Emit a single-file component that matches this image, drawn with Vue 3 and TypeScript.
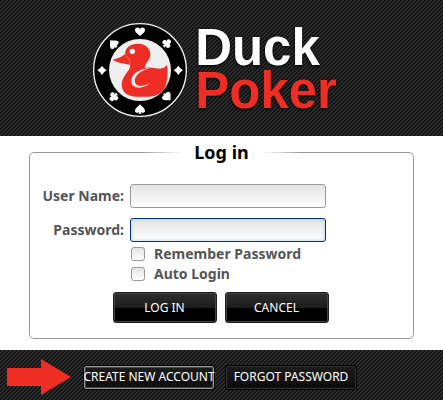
<script setup lang="ts">
import { ref } from 'vue'

const userName = ref('')
const password = ref('')
const remember = ref(false)
const autoLogin = ref(false)

interface Pip { suit: 'heart' | 'club' | 'diamond' | 'spade'; x: number; y: number; turn: number }

const shapes: Record<Pip['suit'], string> = {
  heart: 'M0 13C-5 8-15 3-15-5C-15-14-4-15 0-8C4-15 15-14 15-5C15 3 5 8 0 13Z',
  spade: 'M0-14C4-8 15-2 15 5C15 12 6 13 2 9L5 14H-5L-2 9C-6 13-15 12-15 5C-15-2-4-8 0-14Z',
  diamond: 'M0-14Q5-5 14 0Q5 5 0 14Q-5 5-14 0Q-5-5 0-14Z',
  club: 'M0-14C8-14 9-6 4-3C9-7 15-2 14 4C12 11 5 11 2 6L5 14H-5L-2 6C-5 11-12 11-14 4C-15-2-9-7-4-3C-9-6-8-14 0-14Z',
}

const pips: Pip[] = [
  { suit: 'heart', x: 162, y: 51, turn: 0 },
  { suit: 'club', x: 243, y: 86, turn: 45 },
  { suit: 'diamond', x: 277, y: 167, turn: 0 },
  { suit: 'spade', x: 244, y: 247, turn: 135 },
  { suit: 'spade', x: 162, y: 283, turn: 0 },
  { suit: 'club', x: 83, y: 247, turn: 225 },
  { suit: 'diamond', x: 48, y: 167, turn: 0 },
  { suit: 'spade', x: 82, y: 87, turn: 315 },
]
</script>

<template>
  <div class="page">
    <header class="brand weave">
      <svg class="chip" viewBox="18 22 288 288" aria-hidden="true">
        <circle cx="162" cy="166" r="139" fill="#000" stroke="#f4f4f4" stroke-width="4" />
        <circle cx="162" cy="166" r="93" fill="#efefef" />
        <path
          v-for="(pip, i) in pips"
          :key="i"
          :d="shapes[pip.suit]"
          :transform="`translate(${pip.x} ${pip.y}) rotate(${pip.turn})`"
          fill="#fff"
        />
        <path
          fill="#ee2e24"
          d="M80 135C94 131 108 127 117 118C117 98 134 87 156 87C178 87 194 101 193 121C192 139 177 144 176 160C188 157 198 158 210 161C224 164 237 160 243 150C246 164 245 181 242 202C238 229 216 246 186 246H151C127 246 107 235 107 209C107 183 133 170 133 150C117 147 94 145 80 135Z"
        />
        <path
          fill="#efefef"
          d="M196 161C169 160 140 172 136 195C134 213 150 222 168 218C179 216 187 210 190 205C177 214 157 218 149 207C139 189 162 165 196 161Z"
        />
        <path d="M118 116C119 128 133 129 132 149" fill="none" stroke="#f58a80" stroke-width="2" />
        <circle cx="139" cy="110" r="8" fill="#fff" />
      </svg>
      <h1 class="name"><span>Duck</span><span class="red">Poker</span></h1>
    </header>

    <form class="content" @submit.prevent>
      <section class="panel" aria-labelledby="title">
        <h2 id="title">Log in</h2>
        <div class="fields">
          <label for="user">User Name:</label>
          <input id="user" v-model="userName" class="box" type="text" />
          <label for="pass">Password:</label>
          <input id="pass" v-model="password" class="box active" type="password" />
        </div>
        <div class="options">
          <label><input v-model="remember" type="checkbox" />Remember Password</label>
          <label><input v-model="autoLogin" type="checkbox" />Auto Login</label>
        </div>
        <div class="actions">
          <button type="submit">LOG IN</button>
          <button type="reset">CANCEL</button>
        </div>
      </section>
    </form>

    <footer class="foot weave">
      <svg class="arrow" viewBox="0 0 64 36" aria-hidden="true">
        <path d="M0 9H34V0L64 18L34 36V27H0Z" fill="#ee2e24" />
      </svg>
      <button type="button" class="flat lit">CREATE NEW ACCOUNT</button>
      <button type="button" class="flat">FORGOT PASSWORD</button>
    </footer>
  </div>
</template>

<style>
body {
  margin: 0;
  background: #fff;
}
</style>

<style scoped>
.page {
  display: flex;
  flex-direction: column;
  min-height: 100vh;
  font-family: "Noto Sans", "Open Sans", sans-serif;
  font-size: 14px;
  color: #555;
}

.weave {
  background: linear-gradient(135deg, #131313 25%, #2d2d2d 25% 50%, #131313 50% 75%, #2d2d2d 75%) 0 0 / 4px 4px;
}

.brand {
  box-sizing: border-box;
  display: flex;
  justify-content: center;
  gap: 7px;
  padding: 22px 14px 18px 0;
}

.chip {
  flex: none;
  width: 96px;
  height: 96px;
}

.name {
  display: flex;
  flex-direction: column;
  margin: 4px 0 0;
  font: bold 51px/43px "Liberation Sans", Arial, sans-serif;
  color: #fff;
  text-shadow: 0 1px 3px #000;
}

.red {
  color: #ee2e24;
}

.content {
  flex: 1;
  padding: 16px 29px 11px;
}

.panel {
  box-sizing: border-box;
  border: 1px solid #999;
  border-radius: 5px;
  padding-bottom: 15px;
}

h2 {
  width: 160px;
  margin: -13px auto 0;
  background: linear-gradient(90deg, transparent, #fff 25% 75%, transparent);
  font-size: 18px;
  line-height: 24px;
  text-align: center;
  color: #000;
}

.fields {
  display: grid;
  grid-template-columns: 94px 196px;
  gap: 10px 6px;
  margin-top: 20px;
  font-weight: bold;
}

.fields label {
  line-height: 24px;
  text-align: right;
  white-space: nowrap;
}

.box {
  box-sizing: border-box;
  width: 100%;
  height: 24px;
  padding: 0 6px;
  border: 1px solid #999;
  border-radius: 3px;
  background: linear-gradient(#e3e3e3, #fff);
  font: inherit;
  outline: none;
}

.active {
  border-color: #00307c;
  box-shadow: inset 0 0 4px #b8d2e4;
}

.options {
  display: flex;
  flex-direction: column;
  align-items: flex-start;
  margin: 2px 0 0 101px;
  font-weight: bold;
}

.options label {
  display: flex;
  align-items: center;
  gap: 9px;
  line-height: 20px;
}

.options input {
  appearance: none;
  box-sizing: border-box;
  width: 14px;
  height: 14px;
  margin: 0;
  border: 1px solid #999;
  border-radius: 3px;
  background: linear-gradient(#e3e3e3, #fff);
}

.options input:checked {
  background: #00307c;
}

.actions {
  display: flex;
  justify-content: center;
  gap: 8px;
  margin: 8px 2px 0 0;
}

button {
  box-sizing: border-box;
  width: 104px;
  height: 31px;
  padding: 0;
  border: 1px solid #1c1c1c;
  border-radius: 3px;
  background: linear-gradient(#2e2e2e, #1c1c1c 50%, #000 51%);
  box-shadow: inset 0 0 0 1px #444;
  font: 12px/16px "Noto Sans", "Open Sans", sans-serif;
  color: #fff;
  white-space: nowrap;
}

.foot {
  display: flex;
  align-items: center;
  gap: 10px;
  padding: 9px 7px 5px;
}

.arrow {
  flex: none;
  width: 64px;
  height: 36px;
  margin-right: 2px;
}

.flat {
  display: flex;
  justify-content: center;
  align-items: center;
  width: 132px;
  height: 25px;
  border-color: #000;
  background: linear-gradient(#1c1c1c, #0c0c0c);
  box-shadow: inset 0 0 0 1px #333;
}

.lit {
  box-shadow: inset 0 0 0 1px #999, inset 0 0 0 2px #444;
}
</style>
